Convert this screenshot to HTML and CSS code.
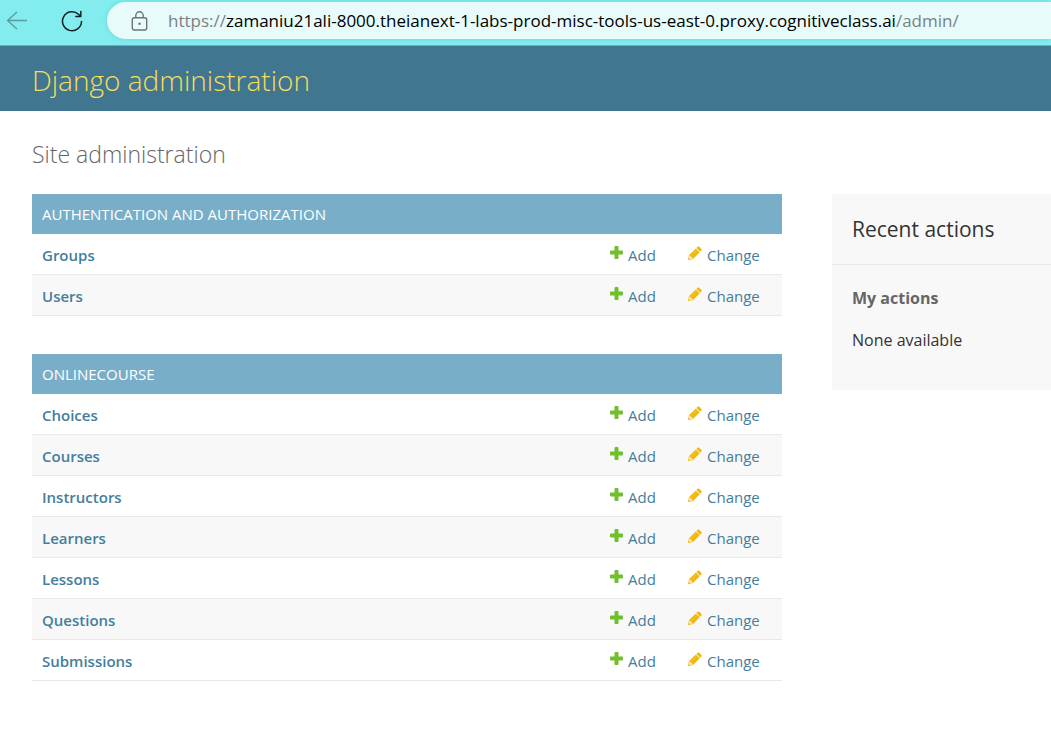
FILE: index.html
```html
<!DOCTYPE html>
<html lang="en">
<head>
<meta charset="utf-8">
<meta name="viewport" content="width=device-width, initial-scale=1">
<title>Site administration | Django site admin</title>
<link rel="stylesheet" href="styles.css">
</head>
<body>
<svg class="sprite" aria-hidden="true">
  <symbol id="icon-add" viewBox="0 0 13 13"><path fill="#70bf2b" d="M4.500 1q0-1 1-1h2q1 0 1 1v3.500h3.500q1 0 1 1v2q0 1-1 1H8.500V12q0 1-1 1h-2q-1 0-1-1V8.500H1q-1 0-1-1v-2q0-1 1-1h3.500z"/></symbol>
  <symbol id="icon-change" viewBox="0 0 14 14"><path fill="#efb80b" d="M9.600.8q.9-.8 1.700 0l2.100 2.100q.8.800 0 1.700l-1.200 1.200-3.800-3.800z"/><path fill="#efb80b" d="M7.900 2.500l3.800 3.800-6.600 6.600-4.500 1q-.6 0-.5-.5l1-4.300z"/><path fill="none" stroke="#fbe9b5" stroke-width=".9" d="M8.100 2.200l3.900 3.900"/><path fill="#fbe9b5" d="M1.600 9.600l1.200.2.200 1.300 1.400.3.200 1.200-2.300.6-1.300-1.300z"/><path fill="none" stroke="#f6d36a" stroke-width=".5" d="M3.500 9.300l5-5"/></symbol>
</svg>

<div class="browser-bar">
  <button class="nav-button" type="button" aria-label="Back">
    <svg class="nav-icon" viewBox="0 0 22 22"><path fill="none" stroke="#5a9b9d" stroke-width="1.300" d="M21 10.500H1.500M11 2l-9.500 8.500L11 19"/></svg>
  </button>
  <button class="nav-button" type="button" aria-label="Reload">
    <svg class="nav-icon" viewBox="0 0 22 22"><path fill="none" stroke="#102020" stroke-width="1.500" stroke-linecap="round" stroke-linejoin="round" d="M20.500 11.500A9.500 9.500 0 1 1 17.500 4.300L19.500 6.200M19.800 1.500v5h-5"/></svg>
  </button>
  <div class="address">
    <svg class="lock-icon" viewBox="0 0 16 20"><g fill="none" stroke="#6b7475" stroke-width="1.400"><rect x=".8" y="6.700" width="14.400" height="12.300" rx="2"/><path d="M4.300 6.700V4.500a3.700 3.700 0 0 1 7.400 0v2.200"/></g><circle cx="8" cy="12.700" r="1.200" fill="#6b7475"/></svg>
    <div class="url" role="textbox" aria-label="Address" contenteditable="true" spellcheck="false">https://<span class="url-host">zamaniu21ali-8000.theianext-1-labs-prod-misc-tools-us-east-0.proxy.cognitiveclass.ai</span>/admin/</div>
  </div>
</div>

<header class="site-header"><h1 class="site-name"><a href="#">Django administration</a></h1></header>

<main class="content">
  <h2 class="page-title">Site administration</h2>
  <div class="columns">
    <div class="modules">
      <table class="module">
        <caption><a href="#">AUTHENTICATION AND AUTHORIZATION</a></caption>
        <tbody>
          <tr><th scope="row"><a href="#">Groups</a></th><td class="add"><a class="action" href="#"><svg class="add-icon"><use href="#icon-add"/></svg>Add</a></td><td class="change"><a class="action" href="#"><svg class="change-icon"><use href="#icon-change"/></svg>Change</a></td></tr>
          <tr><th scope="row"><a href="#">Users</a></th><td class="add"><a class="action" href="#"><svg class="add-icon"><use href="#icon-add"/></svg>Add</a></td><td class="change"><a class="action" href="#"><svg class="change-icon"><use href="#icon-change"/></svg>Change</a></td></tr>
        </tbody>
      </table>
      <table class="module">
        <caption><a href="#">ONLINECOURSE</a></caption>
        <tbody>
          <tr><th scope="row"><a href="#">Choices</a></th><td class="add"><a class="action" href="#"><svg class="add-icon"><use href="#icon-add"/></svg>Add</a></td><td class="change"><a class="action" href="#"><svg class="change-icon"><use href="#icon-change"/></svg>Change</a></td></tr>
          <tr><th scope="row"><a href="#">Courses</a></th><td class="add"><a class="action" href="#"><svg class="add-icon"><use href="#icon-add"/></svg>Add</a></td><td class="change"><a class="action" href="#"><svg class="change-icon"><use href="#icon-change"/></svg>Change</a></td></tr>
          <tr><th scope="row"><a href="#">Instructors</a></th><td class="add"><a class="action" href="#"><svg class="add-icon"><use href="#icon-add"/></svg>Add</a></td><td class="change"><a class="action" href="#"><svg class="change-icon"><use href="#icon-change"/></svg>Change</a></td></tr>
          <tr><th scope="row"><a href="#">Learners</a></th><td class="add"><a class="action" href="#"><svg class="add-icon"><use href="#icon-add"/></svg>Add</a></td><td class="change"><a class="action" href="#"><svg class="change-icon"><use href="#icon-change"/></svg>Change</a></td></tr>
          <tr><th scope="row"><a href="#">Lessons</a></th><td class="add"><a class="action" href="#"><svg class="add-icon"><use href="#icon-add"/></svg>Add</a></td><td class="change"><a class="action" href="#"><svg class="change-icon"><use href="#icon-change"/></svg>Change</a></td></tr>
          <tr><th scope="row"><a href="#">Questions</a></th><td class="add"><a class="action" href="#"><svg class="add-icon"><use href="#icon-add"/></svg>Add</a></td><td class="change"><a class="action" href="#"><svg class="change-icon"><use href="#icon-change"/></svg>Change</a></td></tr>
          <tr><th scope="row"><a href="#">Submissions</a></th><td class="add"><a class="action" href="#"><svg class="add-icon"><use href="#icon-add"/></svg>Add</a></td><td class="change"><a class="action" href="#"><svg class="change-icon"><use href="#icon-change"/></svg>Change</a></td></tr>
        </tbody>
      </table>
    </div>
    <aside class="recent">
      <h2 class="recent-title">Recent actions</h2>
      <div class="recent-body">
        <h3 class="recent-subtitle">My actions</h3>
        <p class="recent-text">None available</p>
      </div>
    </aside>
  </div>
</main>
</body>
</html>
```

FILE: styles.css
```css
* { box-sizing: border-box; }

body {
  margin: 0;
  background: #fff;
  color: #333;
  font-family: "Open Sans", "Noto Sans", sans-serif;
  font-size: 15px;
  line-height: 20px;
}

a { color: inherit; text-decoration: none; }
h1, h2, h3, p { margin: 0; }
.sprite { display: none; }

.browser-bar {
  display: flex;
  align-items: flex-start;
  background: #83ecee;
  border-bottom: 1px solid #5fb3bb;
  padding: 2px 0 6px 6px;
}

.nav-button {
  display: flex;
  align-items: center;
  height: 37px;
  margin-right: 33px;
  padding: 0;
  border: 0;
  background: none;
}

.nav-button + .nav-button { margin-right: 24px; }
.nav-icon { width: 22px; height: 22px; }

.address {
  display: flex;
  flex: 1;
  align-items: center;
  gap: 20px;
  min-width: 0;
  height: 37px;
  padding-left: 24px;
  border-radius: 19px 0 0 19px;
  background: #e7fbfb;
  box-shadow: 0 0 5px #65d5d9;
}

.lock-icon { width: 17px; height: 20px; flex: none; }
.url { overflow: hidden; white-space: nowrap; color: #7b8182; font-size: 17px; line-height: 24px; }
.url-host { color: #000; }

.site-header {
  padding: 16px 32px 13px;
  background: #417690;
  color: #f5dd5d;
}

.site-name { font-size: 28px; font-weight: 300; line-height: 36px; }

.content { padding: 28px 0 40px 32px; }
.page-title { margin-bottom: 25px; color: #666; font-size: 23px; font-weight: 300; line-height: 30px; }

.columns {
  display: grid;
  grid-template-columns: minmax(0, 1fr) 219px;
  align-items: start;
  gap: 50px;
}

.modules { display: grid; gap: 38px; }
.module { width: 100%; border-collapse: separate; border-spacing: 0; }

.module caption {
  padding: 10px;
  background: #79aec8;
  color: #fff;
  font-size: 15px;
  text-align: left;
}

.module th, .module td {
  padding: 11px 10px 9px;
  border-bottom: 1px solid #e8e8e8;
  color: #447e9b;
  text-align: left;
}

.module th { font-weight: 600; }
.module .add { width: 78px; padding-right: 0; }
.module .change { width: 104px; padding-right: 0; }
.module tr:nth-child(even) { background: #f8f8f8; }

.action { display: flex; gap: 5px; }
.add-icon { width: 13px; height: 13px; margin-top: 1px; flex: none; }
.change-icon { width: 14px; height: 14px; margin-top: 1px; flex: none; }

.recent { background: #f8f8f8; }
.recent-title { padding: 20px; border-bottom: 1px solid #e8e8e8; font-size: 21px; font-weight: 400; line-height: 30px; }
.recent-body { padding: 22px 20px 38px; }
.recent-subtitle { margin-bottom: 20px; color: #666; font-size: 16px; font-weight: 700; line-height: 22px; }
.recent-text { font-size: 16px; line-height: 23px; }
```
